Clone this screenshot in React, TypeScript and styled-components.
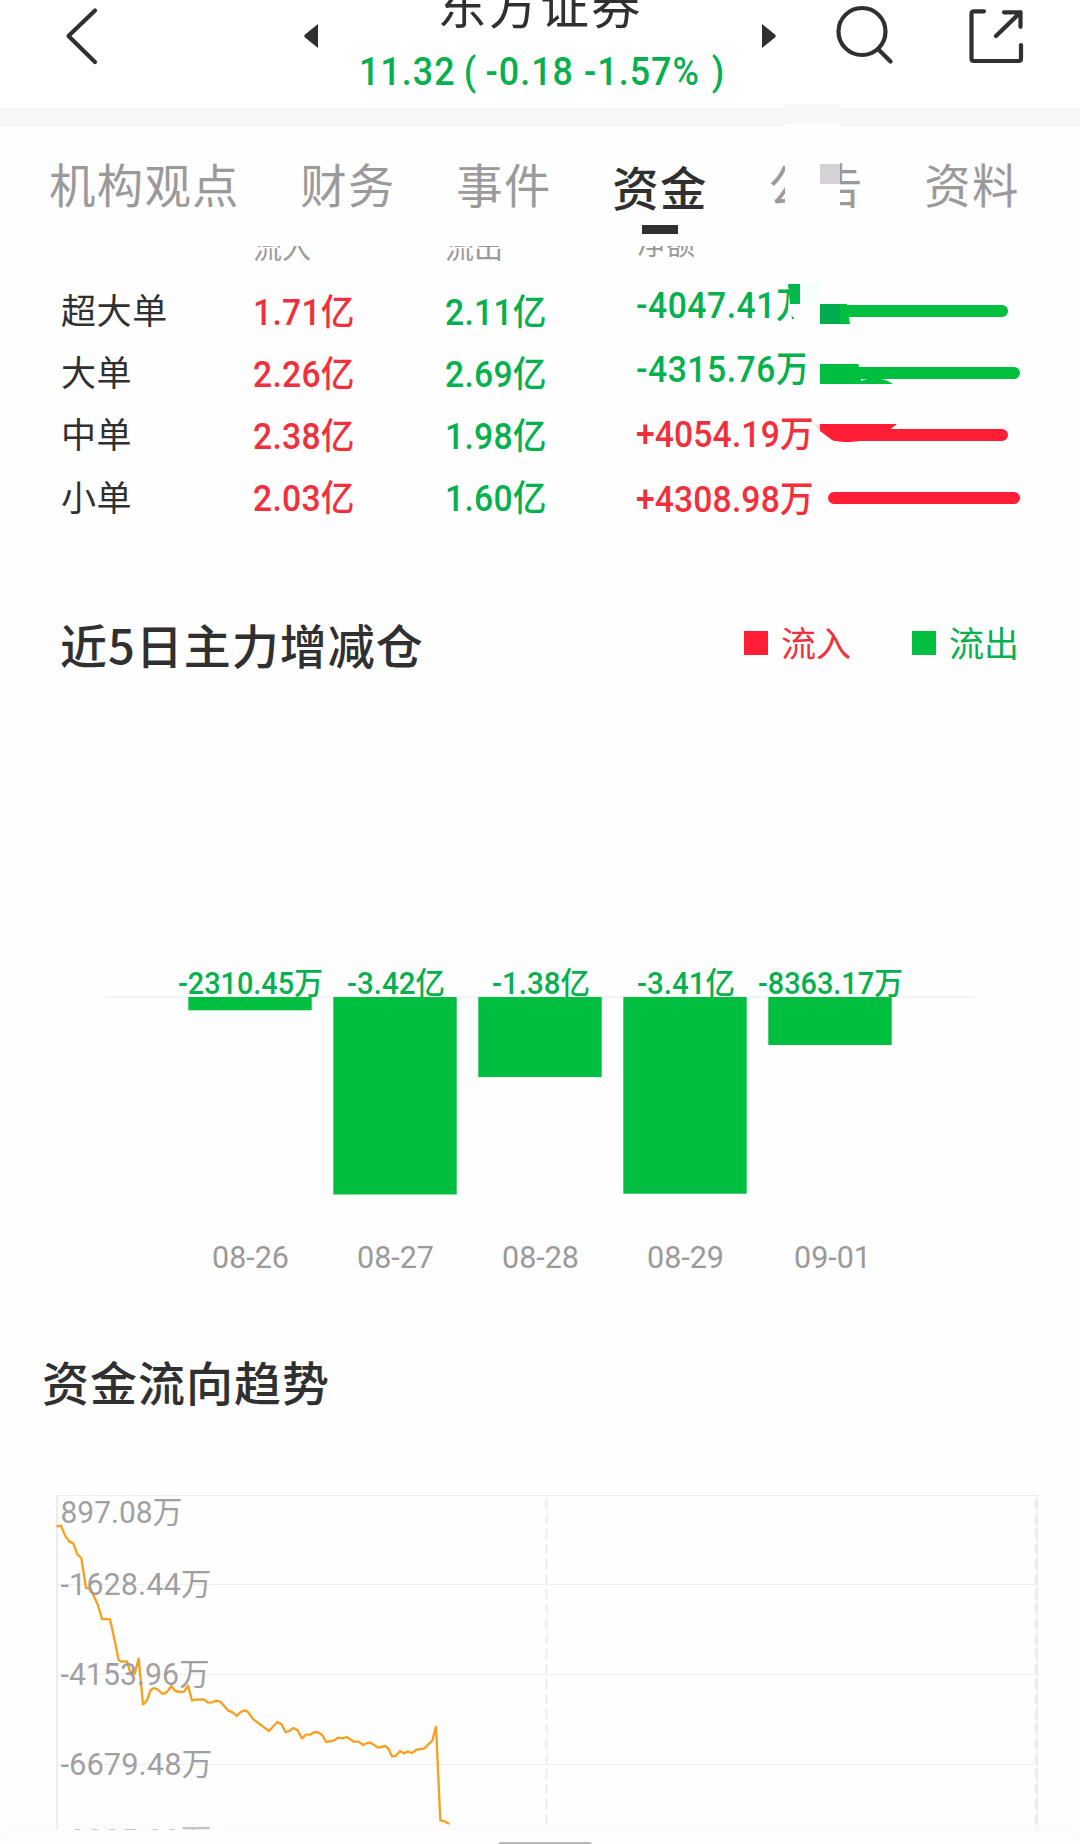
import React from "react";
import styled, { createGlobalStyle } from "styled-components";

const INK = "#303030";
const GREY = "#9b999a";
const RED = "#ff1e36";
const GREEN = "#00bf40";
const RED_TEXT = "#f0303c";
const GREEN_TEXT = "#05b04f";
const CJK = '"Noto Sans CJK SC", sans-serif';
const NUM = 'Roboto, "Noto Sans CJK SC", sans-serif';

const Global = createGlobalStyle`
  * { box-sizing: border-box; }
  body { margin: 0; background: #fefefe; overflow: hidden; }
`;

const Page = styled.div`
  position: relative;
  width: 1080px;
  height: 1844px;
  overflow: hidden;
  display: flex;
  flex-direction: column;
  background: #fefefe;
  font-family: ${CJK};
  color: ${INK};
  white-space: nowrap;
`;

const Header = styled.header`
  height: 108px;
  flex: none;
  display: flex;
  align-items: flex-start;
  background: #fff;
  padding-left: 61px;
`;
const Icon = styled.svg<{ $ml?: number }>`
  display: block;
  flex: none;
  margin-left: ${(p) => p.$ml ?? 0}px;
`;
const Quote = styled.div`
  width: 444px;
  display: flex;
  flex-direction: column;
  align-items: center;
`;
const StockName = styled.div`
  height: 46px;
  line-height: 60px;
  margin-top: -27px;
  font-size: 49px;
  letter-spacing: 2.2px;
`;
const Price = styled.div`
  display: flex;
  margin-top: 28px;
  height: 50px;
  font: 500 39px/50px ${NUM};
  color: ${GREEN_TEXT};
  transform: translateX(2px) scaleX(0.92);
  letter-spacing: 1.1px;
`;
const PricePart = styled.span<{ $gap?: number }>`
  margin-left: ${(p) => p.$gap ?? 0}px;
`;

const Band = styled.div`
  height: 18px;
  flex: none;
  background: #f7f7f7;
`;

const Tabs = styled.nav`
  height: 120px;
  flex: none;
  display: flex;
  gap: 60.6px;
  padding: 22px 0 0 49px;
`;
const Tab = styled.div<{ $active?: boolean }>`
  display: flex;
  flex-direction: column;
  align-items: center;
  height: 98px;
  padding-top: ${(p) => (p.$active ? 3 : 0)}px;
  font-size: 46.4px;
  line-height: 70px;
  letter-spacing: 1.3px;
  font-weight: ${(p) => (p.$active ? 500 : 400)};
  color: ${(p) => (p.$active ? INK : GREY)};
`;
const Indicator = styled.div`
  width: 36px;
  height: 9px;
  margin-top: 4px;
  background: ${INK};
`;

const ColumnHeads = styled.div`
  height: 20px;
  flex: none;
  display: flex;
  overflow: hidden;
  padding-left: 253px;
  align-items: flex-end;
`;
const ColumnHead = styled.div<{ $lift?: number }>`
  width: 192px;
  font-size: 29px;
  line-height: 30px;
  color: ${GREY};
  margin-bottom: ${(p) => p.$lift ?? 5}px;
`;

const Flows = styled.section`
  height: 327px;
  flex: none;
  display: flex;
  padding-left: 61px;
`;
const Column = styled.div<{ $w: number; $top: number }>`
  width: ${(p) => p.$w}px;
  padding-top: ${(p) => p.$top}px;
`;
const Label = styled.div`
  height: 62.3px;
  line-height: 62px;
  font-size: 35px;
  letter-spacing: 0.6px;
`;
const Amount = styled.div<{ $up: boolean; $h: number; $sp?: number }>`
  height: ${(p) => p.$h}px;
  width: max-content;
  font: 500 36.6px/62px ${NUM};
  letter-spacing: ${(p) => p.$sp ?? 0.3}px;
  color: ${(p) => (p.$up ? RED_TEXT : GREEN_TEXT)};
  transform: scaleX(0.92);
  transform-origin: 0 50%;
`;

const SectionHead = styled.div<{ $left: number; $h: number }>`
  height: ${(p) => p.$h}px;
  flex: none;
  display: flex;
  align-items: flex-start;
  padding: 16px 61px 0 ${(p) => p.$left}px;
`;
const SectionTitle = styled.h2`
  margin: 0 auto 0 0;
  font-size: 47px;
  font-weight: 500;
  line-height: 70px;
  letter-spacing: 1px;
`;
const Legend = styled.div<{ $color: string; $text: string }>`
  display: flex;
  align-items: center;
  gap: 13px;
  margin: 8px 0 0 61px;
  font-size: 35px;
  line-height: 50px;
  color: ${(p) => p.$text};
  &::before {
    content: "";
    width: 24px;
    height: 24px;
    margin-top: 1px;
    background: ${(p) => p.$color};
  }
`;
const Chart = styled.svg`
  display: block;
  flex: none;
`;

const Overlay = styled.svg`
  position: absolute;
  left: 780px;
  top: 100px;
`;
const Sheet = styled.svg`
  position: absolute;
  left: 0;
  bottom: 0;
`;

const tabs = ["机构观点", "财务", "事件", "资金", "公告", "资料"];
const rows = [
  { name: "超大单", inflow: "1.71亿", outflow: "2.11亿", net: "-4047.41万" },
  { name: "大单", inflow: "2.26亿", outflow: "2.69亿", net: "-4315.76万" },
  { name: "中单", inflow: "2.38亿", outflow: "1.98亿", net: "+4054.19万" },
  { name: "小单", inflow: "2.03亿", outflow: "1.60亿", net: "+4308.98万" },
];
const days = [
  { d: "08-26", v: "-2310.45万", h: 13.3, tx: 178, tw: 145, dx: 212 },
  { d: "08-27", v: "-3.42亿", h: 197.5, tx: 347, tw: 98, dx: 357 },
  { d: "08-28", v: "-1.38亿", h: 80, tx: 492, tw: 98, dx: 502 },
  { d: "08-29", v: "-3.41亿", h: 196.7, tx: 637, tw: 98, dx: 647 },
  { d: "09-01", v: "-8363.17万", h: 48, tx: 758, tw: 145, dx: 794 },
];
const levels = [
  { t: "897.08万", y: 1522.7, w: 122 },
  { t: "-1628.44万", y: 1595, w: 151 },
  { t: "-4153.96万", y: 1684.8, w: 149 },
  { t: "-6679.48万", y: 1775, w: 152 },
  { t: "-9205.00万", y: 1850.9, w: 151 },
];
const trend =
  "172,589 183,587 195,616 207,634 220,640 232,673 244,684 258,774 270,775 284,803 294,826 306,867 330,868 343,926 356,990 364,995 381,994 391,1027 404,1031 416,986 429,1123 434,1120 442,1108 452,1080 462,1074 472,1078 488,1092 498,1088 506,1080 514,1068 526,1083 540,1086 552,1085 564,1067 576,1111 588,1109 611,1108 624,1118 636,1117 649,1112 661,1115 684,1141 698,1147 710,1158 722,1146 734,1141 744,1146 760,1168 807,1203 820,1189 832,1176 844,1182 857,1207 868,1203 880,1194 893,1201 906,1225 918,1214 930,1214 944,1206 956,1208 966,1214 979,1236 1003,1231 1014,1223 1028,1225 1040,1221 1062,1235 1076,1235 1090,1245 1102,1239 1112,1238 1135,1253 1155,1248 1164,1254 1176,1279 1187,1278 1200,1263 1212,1270 1224,1265 1236,1269 1250,1259 1272,1256 1286,1242 1297,1232 1308,1190 1321,1471 1334,1474 1346,1481";

export default function App() {
  return (
    <Page>
      <Global />
      <Header>
        <Icon width="40" height="72" fill="none" stroke={INK} strokeWidth="4.2" strokeLinecap="round" strokeLinejoin="round">
          <path d="M34 10.500L7.500 36l26.500 26" />
        </Icon>
        <Icon $ml={203} width="14" height="60" fill={INK}>
          <path d="M14 24v24L1 37.500q-1.500-1.500 0-3z" />
        </Icon>
        <Quote>
          <StockName>东方证券</StockName>
          <Price>
            <PricePart>11.32</PricePart>
            <PricePart $gap={9}>(</PricePart>
            <PricePart $gap={9}>-0.18</PricePart>
            <PricePart $gap={11}>-1.57%</PricePart>
            <PricePart $gap={13}>)</PricePart>
          </Price>
        </Quote>
        <Icon width="14" height="60" fill={INK}>
          <path d="M0 24v24L13 37.500q1.500-1.500 0-3z" />
        </Icon>
        <Icon $ml={60} width="60" height="70" fill="none" stroke={INK} strokeWidth="4.2" strokeLinecap="round">
          <circle cx="26" cy="31.500" r="23.500" />
          <path d="M43 50l11.500 11.500" />
        </Icon>
        <Icon $ml={68} width="64" height="70" fill="none" stroke={INK} strokeWidth="4.2" strokeLinecap="round" strokeLinejoin="round">
          <path d="M20 11.300H10q-2.500 0-2.500 2.500V58.500q0 2.500 2.500 2.500h44.500q2.500 0 2.500-2.500V45M40 12.300h16.500v14.500M56.500 12.300L32 36" />
        </Icon>
      </Header>
      <Band />
      <Tabs>
        {tabs.map((t) => (
          <Tab key={t} $active={t === "资金"}>
            {t}
            {t === "资金" && <Indicator />}
          </Tab>
        ))}
      </Tabs>
      <ColumnHeads>
        <ColumnHead>流入</ColumnHead>
        <ColumnHead>流出</ColumnHead>
        <ColumnHead $lift={9}>净额</ColumnHead>
      </ColumnHeads>
      <Flows>
        <Column $w={192} $top={11.8}>
          {rows.map((r) => <Label key={r.name}>{r.name}</Label>)}
        </Column>
        <Column $w={192} $top={15.5}>
          {rows.map((r) => <Amount key={r.name} $up $h={62.3}>{r.inflow}</Amount>)}
        </Column>
        <Column $w={191} $top={15.5}>
          {rows.map((r) => <Amount key={r.name} $up={false} $h={62.3}>{r.outflow}</Amount>)}
        </Column>
        <Column $w={200} $top={8.5}>
          {rows.map((r) => (
            <Amount key={r.name} $up={r.net[0] === "+"} $h={64.7} $sp={r.net[0] === "+" ? 0.15 : 0.6}>{r.net}</Amount>
          ))}
        </Column>
      </Flows>
      <SectionHead $left={60} $h={104}>
        <SectionTitle>近5日主力增减仓</SectionTitle>
        <Legend $color={RED} $text={RED_TEXT}>流入</Legend>
        <Legend $color={GREEN} $text={GREEN_TEXT}>流出</Legend>
      </SectionHead>
      <Chart width="1080" height="633" viewBox="0 697 1080 633">
        <rect x="105" y="996" width="870" height="2" fill="#f6f1f4" />
        {days.map((x, i) => (
          <g key={x.d} fontFamily={NUM}>
            <rect x={188.3 + i * 145} y="997" width="123.400" height={x.h} fill={GREEN} />
            <text x={x.tx} y="993.700" fontSize="30.500" fontWeight="500" fill={GREEN_TEXT} textLength={x.tw} lengthAdjust="spacingAndGlyphs">{x.v}</text>
            <text x={x.dx} y="1267.700" fontSize="30.500" fill={GREY} textLength="77" lengthAdjust="spacingAndGlyphs">{x.d}</text>
          </g>
        ))}
      </Chart>
      <SectionHead $left={42} $h={106}>
        <SectionTitle>资金流向趋势</SectionTitle>
      </SectionHead>
      <Chart width="1080" height="408" viewBox="0 1436 1080 408">
        <g fill="#ececec">
          <rect x="56" y="1495" width="982" height="1" />
          <rect x="56" y="1495" width="2" height="349" />
          <rect x="1037" y="1495" width="1" height="349" />
          {[1584, 1674, 1764].map((y) => <rect key={y} x="56" y={y} width="982" height="1" fill="#efefef" />)}
        </g>
        <g stroke="#eeebee" strokeDasharray="10 5" fill="none">
          <path d="M546.500 1499V1844" strokeWidth="2" />
          <path d="M1036 1499V1844" strokeWidth="2.500" />
        </g>
        <polyline points={trend} transform="translate(0 1330) scale(0.33333)" fill="none" stroke="#f7a01f" strokeWidth="7" strokeLinejoin="round" strokeLinecap="round" />
        {levels.map((l) => (
          <text key={l.t} x="60.500" y={l.y} fontFamily={NUM} fontSize="30.500" fill={GREY} fillOpacity="0.950" textLength={l.w} lengthAdjust="spacingAndGlyphs">{l.t}</text>
        ))}
      </Chart>
      <Overlay width="250" height="420" viewBox="780 100 250 420">
        <rect x="785" y="104" width="55" height="20" fill="#f7f7f7" />
        <rect x="785" y="124" width="55" height="100" fill="#fefefe" />
        <rect x="820" y="164" width="20" height="20" fill="#d6d1d6" />
        <path d="M789.500 282H820V330H795L788 312z" fill="#fefefe" />
        <path d="M788 284h12v20h-10z" fill="#00b84b" />
        <rect x="800" y="284" width="20" height="20" fill="#f5fffd" />
        <path d="M791.500 315l3 4h-2.500z" fill={GREEN_TEXT} />
        <path d="M805 352h15v36h-18l3-14z" fill="#fefefe" />
        <g fill={GREEN}>
          <rect x="830" y="305" width="178" height="12" rx="6" />
          <path d="M820 304h27l3 20h-30z" />
          <rect x="820" y="304" width="20" height="20" fill="#02ad4e" />
          <rect x="830" y="367" width="190" height="12" rx="6" />
          <path d="M820 364h38.500l3 20H820z" />
          <path d="M861 381q16-7 32 3h-33z" />
        </g>
        <g fill={RED}>
          <rect x="830" y="429" width="178" height="12" rx="6" />
          <path d="M820 424h77l-7 5.500q-19 12-40 12.500-12 0-18-2l-12-9z" />
          <path d="M813 424h7v8z" fill="#ffe3e6" />
          <rect x="828" y="492" width="192" height="12" rx="6" />
        </g>
      </Overlay>
      <Sheet width="1080" height="22" viewBox="0 1822 1080 22">
        <path d="M14 1824H1066Q1074 1828 1080 1836V1844H0V1836Q6 1828 14 1824z" fill="#fdf8fd" fillOpacity="0.400" />
        <path d="M0 1844Q14 1830 36 1830H1044Q1066 1830 1080 1844z" fill="#fefefe" />
        <path d="M498 1844q1-2 3-2h88q2 0 3 2z" fill="#b9b7b9" />
      </Sheet>
    </Page>
  );
}
